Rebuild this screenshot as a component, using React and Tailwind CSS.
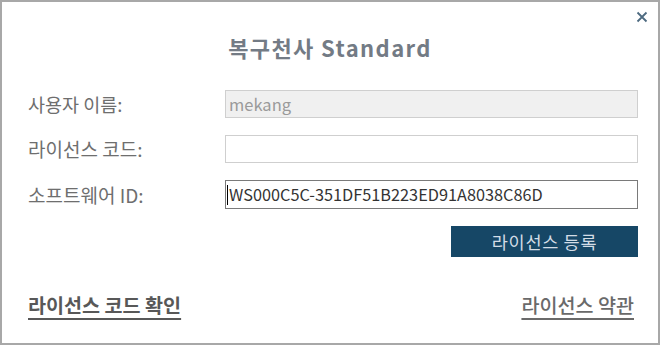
import React from "react";

export default function App() {
  const font = { fontFamily: '"Noto Sans CJK KR", "Noto Sans", sans-serif' };
  return (
    <div
      className="relative w-[660px] h-[345px] bg-white border-2 border-[#a8a8a8] box-border"
      style={font}
    >
      <button className="absolute right-[9px] top-[8px] w-[14px] h-[14px] flex items-center justify-center">
        <svg width="12" height="12" viewBox="0 0 12 12">
          <path d="M1.5 1.5 L10.5 10.5 M10.5 1.5 L1.5 10.5" stroke="#4d6a80" strokeWidth="1.8" />
        </svg>
      </button>
      <div className="flex justify-center pt-[30px]">
        <h1 className="text-[22px] font-bold text-[#737b85] leading-[30px] tracking-[1.4px]">
          복구천사 Standard
        </h1>
      </div>
      <div className="flex flex-col gap-[17px] mt-[28px] pl-[26px] pr-[20px]">
        <div className="flex items-center h-[28px]">
          <label className="w-[197px] text-[18.5px] leading-[28px] text-[#6e6e6e]">사용자 이름:</label>
          <div className="flex-1 h-[28px] bg-[#f0f0f0] border border-[#cfcfcf] flex items-center pl-[3px] text-[16.5px] text-[#9a9a9a]">
            mekang
          </div>
        </div>
        <div className="flex items-center h-[28px]">
          <label className="w-[197px] text-[19px] leading-[28px] text-[#6e6e6e]">라이선스 코드:</label>
          <div className="flex-1 h-[28px] bg-white border border-[#cfcfcf]" />
        </div>
        <div className="flex items-center h-[29px]">
          <label className="w-[197px] text-[19px] leading-[28px] text-[#6e6e6e]">소프트웨어 ID:</label>
          <div className="flex-1 h-[29px] bg-white border border-[#7a7a7a] flex items-center pl-[1px] text-[16.3px] text-[#333]">
            <span className="w-[1px] h-[20px] bg-black mr-[1px]" />
            WS000C5C-351DF51B223ED91A8038C86D
          </div>
        </div>
      </div>
      <div className="flex justify-end pr-[20px] mt-[17px]">
        <button className="w-[187px] h-[31px] bg-[#164766] text-[#d3dde6] text-[17.5px] leading-[31px] tracking-[0.7px]">
          라이선스 등록
        </button>
      </div>
      <div className="flex justify-between items-center pl-[26px] pr-[24px] mt-[34px]">
        <a className="text-[19.6px] leading-[28px] font-bold text-[#585858] underline underline-offset-[5px] decoration-[1.5px]">
          라이선스 코드 확인
        </a>
        <a className="text-[19.6px] leading-[28px] font-medium text-[#6a6a6a] underline underline-offset-[5px] decoration-[1.5px]">
          라이선스 약관
        </a>
      </div>
    </div>
  );
}
